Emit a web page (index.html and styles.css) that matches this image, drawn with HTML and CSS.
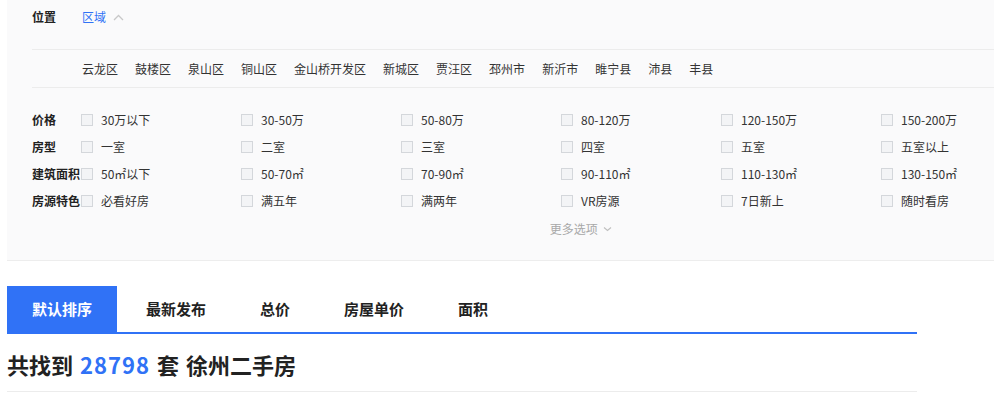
FILE: index.html
```html
<!DOCTYPE html>
<html>
	<head>
		<meta charset="utf-8" />
		<title>徐州二手房</title>
		<link rel="stylesheet" href="styles.css">
	</head>
	<body>
		<div id="filter">
			<div class="pos-row">
				<span class="label">位置</span>
				<span class="area">区域
					<svg class="up" width="11" height="7" viewBox="0 0 11 7"><polyline points="1,6 5.5,1.5 10,6" fill="none" stroke="#c8c8c8" stroke-width="1.3"/></svg>
				</span>
			</div>
			<div class="district-row">
				<a href="#">云龙区</a>
				<a href="#">鼓楼区</a>
				<a href="#">泉山区</a>
				<a href="#">铜山区</a>
				<a href="#">金山桥开发区</a>
				<a href="#">新城区</a>
				<a href="#">贾汪区</a>
				<a href="#">邳州市</a>
				<a href="#">新沂市</a>
				<a href="#">睢宁县</a>
				<a href="#">沛县</a>
				<a href="#">丰县</a>
			</div>
			<div class="opts">
				<div class="opt-row">
					<span class="label">价格</span>
					<span class="opt"><i></i>30万以下</span>
					<span class="opt"><i></i>30-50万</span>
					<span class="opt"><i></i>50-80万</span>
					<span class="opt"><i></i>80-120万</span>
					<span class="opt"><i></i>120-150万</span>
					<span class="opt"><i></i>150-200万</span>
				</div>
				<div class="opt-row">
					<span class="label">房型</span>
					<span class="opt"><i></i>一室</span>
					<span class="opt"><i></i>二室</span>
					<span class="opt"><i></i>三室</span>
					<span class="opt"><i></i>四室</span>
					<span class="opt"><i></i>五室</span>
					<span class="opt"><i></i>五室以上</span>
				</div>
				<div class="opt-row">
					<span class="label">建筑面积</span>
					<span class="opt"><i></i>50㎡以下</span>
					<span class="opt"><i></i>50-70㎡</span>
					<span class="opt"><i></i>70-90㎡</span>
					<span class="opt"><i></i>90-110㎡</span>
					<span class="opt"><i></i>110-130㎡</span>
					<span class="opt"><i></i>130-150㎡</span>
				</div>
				<div class="opt-row">
					<span class="label">房源特色</span>
					<span class="opt"><i></i>必看好房</span>
					<span class="opt"><i></i>满五年</span>
					<span class="opt"><i></i>满两年</span>
					<span class="opt"><i></i>VR房源</span>
					<span class="opt"><i></i>7日新上</span>
					<span class="opt"><i></i>随时看房</span>
				</div>
			</div>
			<div class="more">更多选项
				<svg width="9" height="6" viewBox="0 0 9 6"><polyline points="1,1.5 4.5,4.5 8,1.5" fill="none" stroke="#c0c0c0" stroke-width="1.2"/></svg>
			</div>
		</div>

		<ul id="tabs">
			<li class="active">默认排序</li>
			<li>最新发布</li>
			<li>总价</li>
			<li>房屋单价</li>
			<li>面积</li>
		</ul>

		<h2 class="total">共找到 <span>28798</span> 套 徐州二手房</h2>
	</body>
</html>
```

FILE: styles.css
```css
*{margin: 0;padding: 0;}
html,body{overflow: hidden;}
body{font-family: "Noto Sans CJK SC", "Noto Sans", sans-serif;
color: #333;
background-color: #fff;
}
#filter{width: 1098px;
margin-left: 7px;
padding-left: 25px;
background-color: #fafafb;
border-bottom: 1px solid #ededed;
padding-bottom: 16px;
}
.label{display: inline-block;
width: 50px;
font-size: 12px;
font-weight: bold;
color: #222;
}
.pos-row{display: flex;
height: 49px;
line-height: 34px;
border-bottom: 1px solid #ececec;
}
.area{font-size: 12px;
color: #3072f6;
}
.area .up{margin-left: 4px;
vertical-align: 1px;
}
.district-row{display: flex;
gap: 17px;
height: 37px;
line-height: 37px;
padding-left: 50px;
border-bottom: 1px solid #ececec;
font-size: 12px;
}
.district-row a{color: #333;
text-decoration: none;
}
.opts{padding-top: 18px;}
.opt-row{display: flex;
height: 27px;
align-items: center;
font-size: 12px;
}
.opt-row .label{width: 49px;
white-space: nowrap;
}
.opt{display: flex;
align-items: center;
width: 160px;
color: #333;
}
.opt i{width: 10px;height: 10px;
border: 1px solid #d4d7db;
background-color: #f3f4f6;
margin-right: 8px;
}
.more{height: 30px;
line-height: 30px;
text-align: center;
font-size: 12px;
color: #a8a8a8;
}
.more svg{margin-left: 3px;
vertical-align: 2px;
}
#tabs{list-style: none;
display: flex;
width: 910px;
margin: 25px 0 0 7px;
border-bottom: 2px solid #3072f6;
}
#tabs li{height: 46px;
line-height: 46px;
padding: 0 25px;
margin-right: 4px;
font-size: 15px;
font-weight: bold;
color: #222;
}
#tabs .active{background-color: #3072f6;
color: #fff;
}
.total{width: 910px;
margin: 14px 0 0 7px;
padding-bottom: 11px;
line-height: 32px;
font-size: 22px;
font-weight: bold;
color: #222;
word-spacing: 2px;
border-bottom: 1px solid #ececec;
}
.total span{color: #3072f6;
letter-spacing: 1px;
}
```
